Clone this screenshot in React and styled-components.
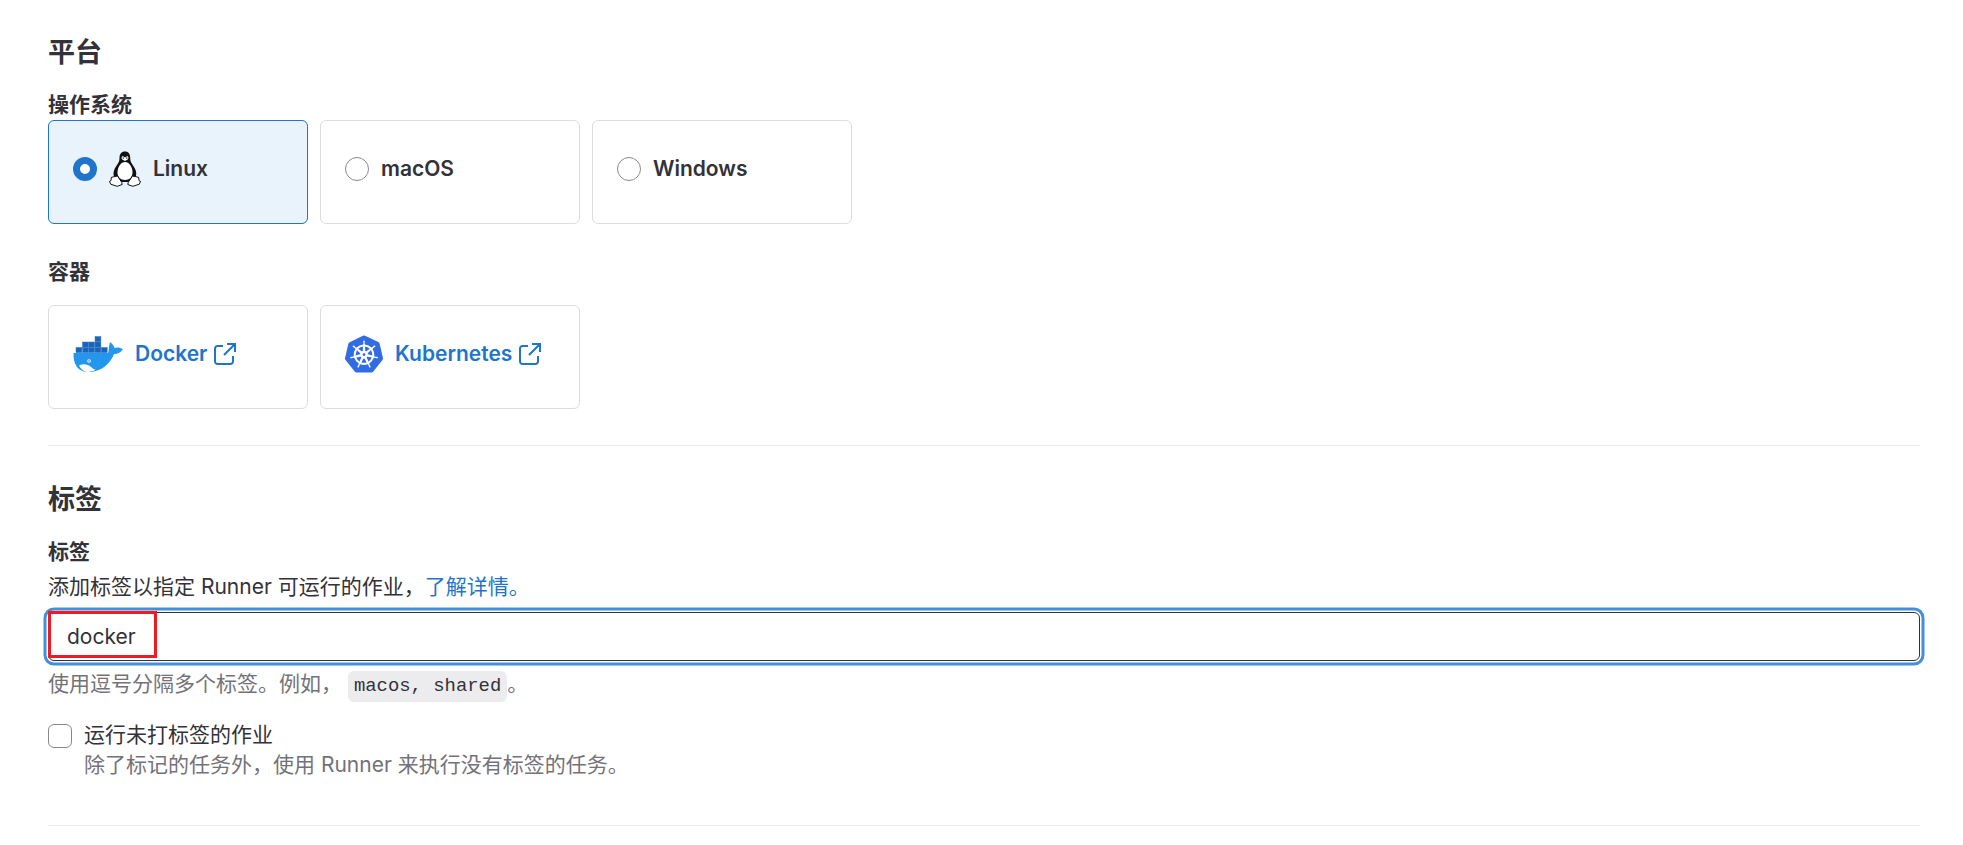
import styled, { createGlobalStyle } from 'styled-components'
import { SiKubernetes } from 'react-icons/si'

const GlobalStyle = createGlobalStyle`
    * { box-sizing: border-box; }
    body {
        margin: 0;
        background: #fff;
        color: #333238;
        font-family: Inter, "Noto Sans CJK SC", sans-serif;
        font-size: 21px;
        line-height: 30px;
    }
`

function TuxIcon() {
    return (
        <svg width="32" height="36" viewBox="0 0 32 36">
            <path fill="#111" d="M16 .5c-3.600 0-5.500 2.600-5.500 6.200 0 3.600-1 5.300-3 8-2.500 3.400-3.600 7-2.700 10.300L9 31l14 0 4-6c.9-3.400-.4-7-2.800-10.200-2-2.700-3-4.400-3-8C21.200 3.100 19.600.5 16 .5z" />
            <path fill="#fff" d="M16 11c-4 0-7.500 5-7.500 10.500 0 4.500 3 7.500 7.500 7.500s7.500-3 7.500-7.500C23.500 16 20 11 16 11z" />
            <path fill="#fff" d="M13 5.500c.8-.6 1.700-.4 2 .6l1 .2 1-.2c.4-1 1.300-1.200 2-.5.600.8.500 2-.3 2.800L16 10l-2.800-1.600c-.8-.8-.8-2.100-.2-2.900z" />
            <path fill="#111" d="M13.700 6.200h1v1.500h-1zM17.300 6.200h1v1.500h-1z" />
            <path fill="#fff" stroke="#111" strokeWidth="1" strokeLinejoin="round" d="M6 25.500 8.500 25l4.200 6.300.5 2.200-5 1.800-6.500-2.100-1.200-2.800 1.500-.8.300-3.200z" />
            <path fill="#fff" stroke="#111" strokeWidth="1" strokeLinejoin="round" d="M26 25.500 23.500 25l-4.200 6.300-.5 2.200 5 1.800 6.500-2.100 1.200-2.800-1.500-.8-.3-3.200z" />
        </svg>
    )
}

function DockerIcon() {
    const blocks = [
        [22, 0.5], [22, 6], [22, 11.500],
        [9.500, 6], [15.700, 6],
        [3, 11.500], [9.500, 11.500], [15.700, 11.500], [28.300, 11.500],
    ]
    return (
        <svg width="50" height="36" viewBox="0 0 50 36">
            {blocks.map(([x, y]) => <rect key={`${x}-${y}`} x={x} y={y} width="5.900" height="5.200" fill="#1d63b8" stroke="#2a7fd4" strokeWidth="0.500" />)}
            <path fill="#2396ed" d="M.5 17H35c1-2 .5-6 2-11 2.500 2 4 4 4.500 6 2.500-1 5.500-.5 8.500 1-2 3.500-5 5-9 5-4 10-12.500 18-26 18C5 36 0 28 .5 17z" />
            <path fill="#fff" d="M6 29.500c4-2 9-1.500 12 1.500 1.500 1.300 3 2.200 4.500 2.700-2.300 1.300-5 2.100-8 2.300-3.700-.3-6.700-2.800-8.500-6.500z" />
            <circle cx="16" cy="25" r="1.800" fill="#fff" />
            <circle cx="16" cy="25" r="0.800" fill="#1d63b8" />
        </svg>
    )
}

function ExternalIcon() {
    return (
        <ExternalSvg width="22" height="22" viewBox="0 0 22 22" fill="none" stroke="currentColor" strokeWidth="2">
            <path d="M9 3H3.500A2.500 2.500 0 0 0 1 5.500v13A2.500 2.500 0 0 0 3.500 21h13a2.500 2.500 0 0 0 2.500-2.500V13" />
            <path d="M13 1h8v8M21 1 10 12" />
        </ExternalSvg>
    )
}

function App() {
    return (
        <Page>
            <GlobalStyle />
            <Section>
                <SectionTitle>平台</SectionTitle>
                <FieldLabel>操作系统</FieldLabel>
                <CardGrid>
                    <Card $selected>
                        <Radio $checked />
                        <IconSlot><TuxIcon /></IconSlot>
                        <CardText>Linux</CardText>
                    </Card>
                    <Card>
                        <Radio />
                        <CardText>macOS</CardText>
                    </Card>
                    <Card>
                        <Radio />
                        <CardText>Windows</CardText>
                    </Card>
                </CardGrid>
                <FieldLabel $spaced>容器</FieldLabel>
                <CardGrid>
                    <Card>
                        <DockerIcon />
                        <CardLink>Docker <ExternalIcon /></CardLink>
                    </Card>
                    <Card>
                        <SiKubernetes size={38} color="#326ce5" />
                        <CardLink>Kubernetes <ExternalIcon /></CardLink>
                    </Card>
                </CardGrid>
            </Section>
            <Divider />
            <Section>
                <SectionTitle $tags>标签</SectionTitle>
                <FieldLabel>标签</FieldLabel>
                <Description>添加标签以指定 Runner 可运行的作业，<TextLink href="#">了解详情。</TextLink></Description>
                <InputWrap>
                    <TagInput defaultValue="docker" />
                    <Annotation />
                </InputWrap>
                <Hint>使用逗号分隔多个标签。例如， <Code>macos, shared</Code>。</Hint>
                <CheckRow>
                    <Checkbox />
                    <div>
                        <CheckLabel>运行未打标签的作业</CheckLabel>
                        <CheckHelp>除了标记的任务外，使用 Runner 来执行没有标签的任务。</CheckHelp>
                    </div>
                </CheckRow>
            </Section>
            <Divider $last />
        </Page>
    )
}

export default App

const Page = styled.div`
    padding: 35px 43px 0 48px;
    height: 845px;
    overflow: hidden;
`

const Section = styled.section`
    display: flex;
    flex-direction: column;
`

const SectionTitle = styled.h2`
    margin: ${props => props.$tags ? '36px' : '0'} 0 19px;
    font-size: 27px;
    line-height: 36px;
    font-weight: 700;
`

const FieldLabel = styled.div`
    margin-top: ${props => props.$spaced ? '33px' : '0'};
    margin-bottom: ${props => props.$spaced ? '9px' : '0'};
    font-weight: 700;
    &:nth-child(2) { margin-bottom: 0; }
`

const CardGrid = styled.div`
    display: grid;
    grid-template-columns: repeat(3, 260px);
    gap: 12px;
    margin-top: 9px;
    &:nth-of-type(2) { margin-top: 0; }
`

const Card = styled.div`
    display: flex;
    align-items: center;
    height: 104px;
    padding: 0 24px 6px;
    border: 1.5px solid ${props => props.$selected ? '#1f75cb' : '#dcdcde'};
    border-radius: 6px;
    background: ${props => props.$selected ? '#e9f3fc' : '#fff'};
    gap: 12px;
`

const Radio = styled.span`
    flex: none;
    width: 24px;
    height: 24px;
    border-radius: 50%;
    border: ${props => props.$checked ? '7.5px solid #1f75cb' : '1.5px solid #89888d'};
    background: #fff;
`

const IconSlot = styled.span`
    display: flex;
`

const CardText = styled.span`
    font-weight: 600;
`

const CardLink = styled.a`
    display: flex;
    align-items: center;
    gap: 7px;
    color: #1f75cb;
    font-weight: 600;
`

const ExternalSvg = styled.svg`
    flex: none;
`

const Divider = styled.hr`
    margin: ${props => props.$last ? '45px' : '36px'} 0 0;
    border: 0;
    border-top: 1.5px solid #ececef;
`

const Description = styled.p`
    margin: 5px 0 10px;
`

const TextLink = styled.a`
    color: #1f75cb;
    text-decoration: none;
`

const InputWrap = styled.div`
    position: relative;
`

const TagInput = styled.input`
    display: block;
    width: 100%;
    height: 49px;
    padding: 0 18px;
    border: 1.5px solid #333238;
    border-radius: 6px;
    outline: none;
    box-shadow: 0 0 0 1.5px #fff, 0 0 0 4.5px #428fdc;
    color: #333238;
    font-family: Inter, "Noto Sans CJK SC", sans-serif;
    font-size: 21px;
`

const Annotation = styled.span`
    position: absolute;
    left: 0;
    top: -1px;
    width: 109px;
    height: 47px;
    border: 3.5px solid #ed1c24;
    pointer-events: none;
`

const Hint = styled.p`
    margin: 8px 0 0;
    color: #737278;
`

const Code = styled.code`
    display: inline-block;
    padding: 0 6px;
    margin: 0 0 0 0;
    border-radius: 6px;
    background: #ececef;
    color: #333238;
    font-family: "Liberation Mono", monospace;
    font-size: 18.9px;
    line-height: 31px;
`

const CheckRow = styled.div`
    display: flex;
    gap: 12px;
    margin-top: 18px;
`

const Checkbox = styled.span`
    flex: none;
    width: 24px;
    height: 24px;
    margin-top: 4px;
    border: 1.5px solid #89888d;
    border-radius: 6px;
    background: #fff;
`

const CheckLabel = styled.div``

const CheckHelp = styled.div`
    color: #737278;
`
